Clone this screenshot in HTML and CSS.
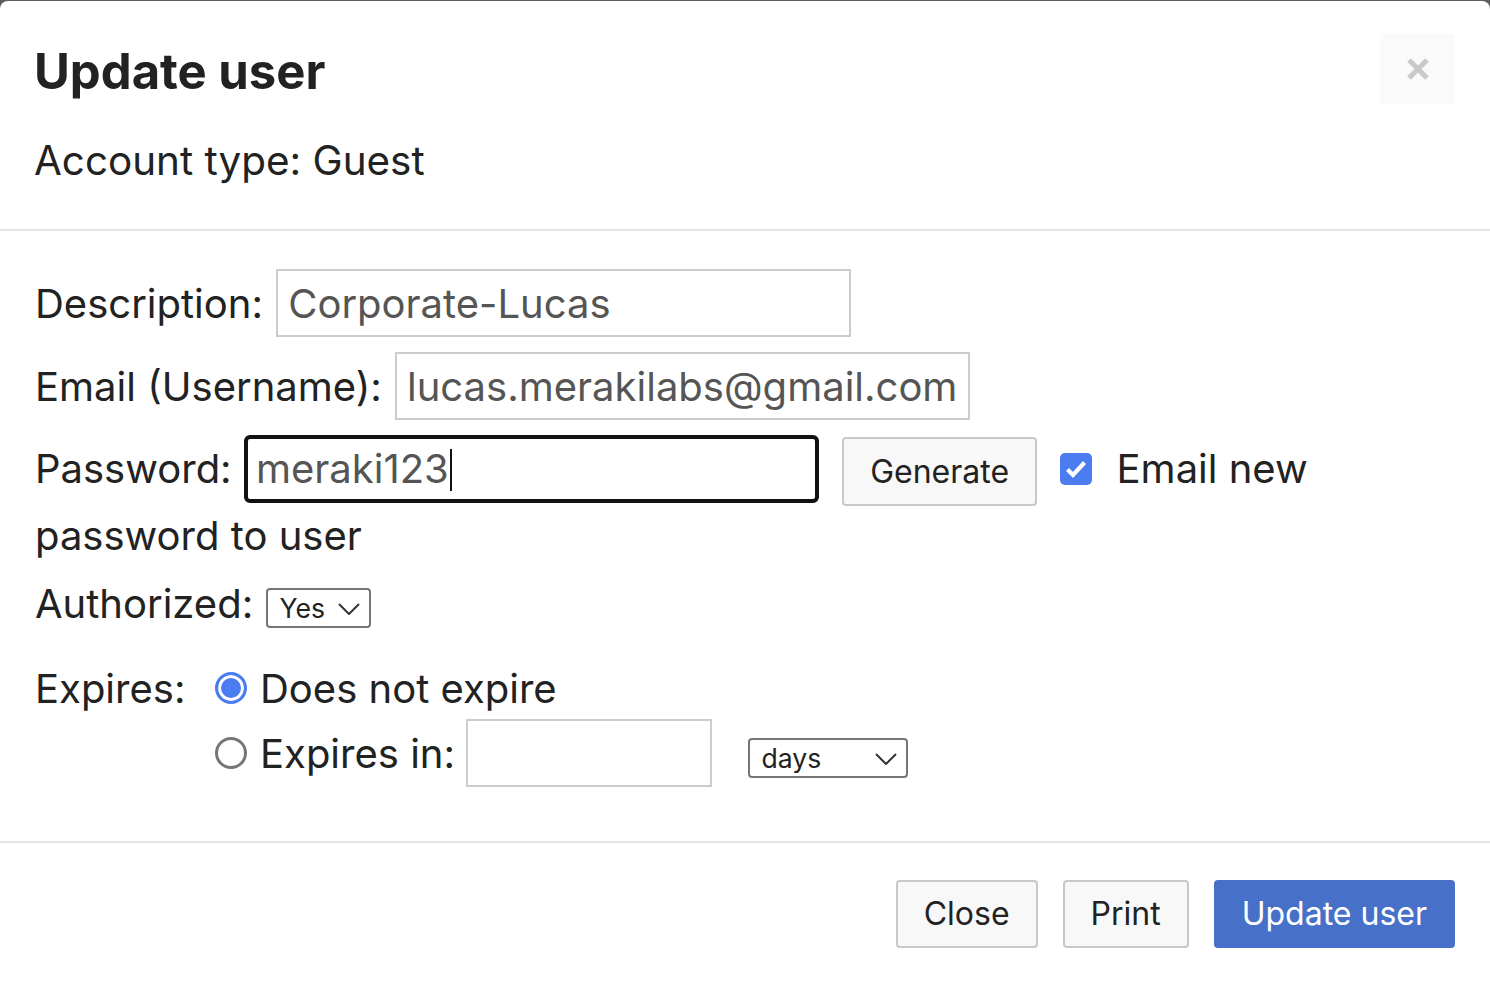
FILE: index.html
```html
<!DOCTYPE html>
<html>
<head>
  <title>Update user</title>
  <link rel="stylesheet" href="styles.css">
</head>
<body>
  <div class="modal">
    <div class="modal-header">
      <div class="header-top">
        <h2 class="modal-title">Update user</h2>
        <button type="button" class="close" aria-label="Close">
          <svg width="26" height="26" viewBox="0 0 26 26">
            <path d="M4 4 L22 22 M22 4 L4 22" stroke="#c9c9c9" stroke-width="5"/>
          </svg>
        </button>
      </div>
      <p class="account-type">Account type: Guest</p>
    </div>

    <form class="modal-body" id="userForm">
      <div class="field-row">
        <label for="description">Description:</label>
        <input type="text" id="description" class="text-input" value="Corporate-Lucas">
      </div>

      <div class="field-row">
        <label for="email">Email (Username):</label>
        <input type="text" id="email" class="text-input" value="lucas.merakilabs@gmail.com">
      </div>

      <div class="field-row password-row">
        <label>Password:</label>
        <span class="text-input focused">meraki123<span class="caret"></span></span>
        <button type="button" class="btn btn-generate">Generate</button>
        <span class="checkbox">
          <svg width="32" height="32" viewBox="0 0 32 32">
            <rect width="32" height="32" rx="5" fill="#4b7cf0"/>
            <path d="M7.5 16.5 L13 22 L24.5 9.5" fill="none" stroke="#fff" stroke-width="4.2"/>
          </svg>
        </span>
        Email new password to user
      </div>

      <div class="field-row authorized-row">
        <label for="authorized">Authorized:</label>
        <select id="authorized" class="small-select select-yes">
          <option>Yes</option>
          <option>No</option>
        </select>
      </div>

      <div class="expires">
        <div class="expires-label">Expires:</div>
        <div class="expires-options">
          <div class="option">
            <span class="radio checked"></span>Does not expire
          </div>
          <div class="option">
            <span class="radio"></span>Expires in:
            <input type="text" class="text-input expire-amount">
            <select class="small-select select-days">
              <option>days</option>
              <option>weeks</option>
            </select>
          </div>
        </div>
      </div>
    </form>

    <div class="modal-footer">
      <button type="button" class="btn">Close</button>
      <button type="button" class="btn">Print</button>
      <button type="submit" class="btn btn-primary" form="userForm">Update user</button>
    </div>
  </div>
</body>
</html>
```

FILE: styles.css
```css
html {
  background: #5e5e5e;
}

body {
  margin: 0;
  font-family: Inter, "Noto Sans", sans-serif;
  color: #222;
  font-size: 40px;
  line-height: 60px;
}

.modal {
  margin-top: 1px;
  background: #fff;
  border-radius: 8px 8px 0 0;
  min-height: 1000px;
}

/* header */
.modal-header {
  padding: 32px 35px 38px 34px;
  border-bottom: 2px solid #e5e5e5;
}

.header-top {
  display: flex;
  justify-content: space-between;
  align-items: flex-start;
}

.modal-title {
  margin: 9px 0 0;
  font-size: 49px;
  line-height: 60px;
  font-weight: 700;
  color: #222;
}

.close {
  width: 75px;
  height: 71px;
  border: none;
  border-radius: 4px;
  background: #fafafa;
  padding: 0;
  display: flex;
  align-items: center;
  justify-content: center;
  cursor: pointer;
}

.account-type {
  margin: 27px 0 0;
  font-size: 40.4px;
}

/* body */
.modal-body {
  padding: 38px 36px 54px 35px;
}

.field-row {
  margin-bottom: 15px;
}

.text-input {
  display: inline-block;
  box-sizing: border-box;
  width: 575px;
  height: 68px;
  padding: 8px 10px;
  border: 2px solid #ccc;
  font-family: inherit;
  font-size: 40px;
  line-height: 48px;
  color: #555;
  vertical-align: baseline;
  margin-left: 2px;
}

.text-input.focused {
  border: 4px solid #111;
  border-radius: 6px;
  padding: 6px 8px;
  white-space: nowrap;
  margin-left: 1px;
}

.caret {
  display: inline-block;
  width: 2px;
  height: 42px;
  background: #111;
  vertical-align: -8px;
  margin-left: 1px;
}

.btn {
  box-sizing: border-box;
  height: 68px;
  font-family: inherit;
  font-size: 32px;
  line-height: 40px;
  color: #222;
  background: #f8f8f8;
  border: 2px solid #c8c8c8;
  border-radius: 4px;
  padding: 12px 26px;
  cursor: pointer;
}

.btn-generate {
  height: 69px;
  line-height: 38px;
  padding: 14px 26px;
  margin-left: 12px;
}

.checkbox {
  display: inline-block;
  width: 32px;
  height: 32px;
  margin: 0 13px 0 12px;
  vertical-align: -2px;
}

.checkbox svg {
  display: block;
}

.authorized-row {
  margin-top: -7px;
}

.small-select {
  appearance: none;
  -webkit-appearance: none;
  box-sizing: border-box;
  font-family: inherit;
  font-size: 26.6px;
  height: 40px;
  padding: 0 0 0 11px;
  border: 2px solid #767676;
  border-radius: 4px;
  color: #222;
  background-color: #fff;
  background-repeat: no-repeat;
  background-image: url("data:image/svg+xml;utf8,<svg xmlns='http://www.w3.org/2000/svg' width='22' height='12' viewBox='0 0 22 12'><path d='M1 1 L11 11 L21 1' fill='none' stroke='%23333' stroke-width='2'/></svg>");
}

.select-yes {
  width: 105px;
  margin-left: 2px;
  background-position: 70px 13px;
}

.select-days {
  width: 160px;
  margin-left: 25px;
  background-position: 125px 13px;
}

/* expires */
.expires {
  display: flex;
  margin-top: 25px;
}

.expires-label {
  width: 180px;
}

.option {
  white-space: nowrap;
}

.radio {
  display: inline-block;
  box-sizing: border-box;
  width: 32px;
  height: 32px;
  border-radius: 50%;
  border: 3px solid #767676;
  background: #fff;
  margin-right: 13px;
  vertical-align: -1px;
}

.radio.checked {
  border-color: #4b7cf0;
  background: #4b7cf0;
  box-shadow: inset 0 0 0 3px #fff;
}

.expire-amount {
  width: 246px;
  margin-left: 0;
}

/* footer */
.modal-footer {
  border-top: 2px solid #e5e5e5;
  padding: 37px 35px;
  display: flex;
  justify-content: flex-end;
  gap: 25px;
}

.btn-primary {
  background: #4771c8;
  border-color: #4771c8;
  color: #fff;
}
```
